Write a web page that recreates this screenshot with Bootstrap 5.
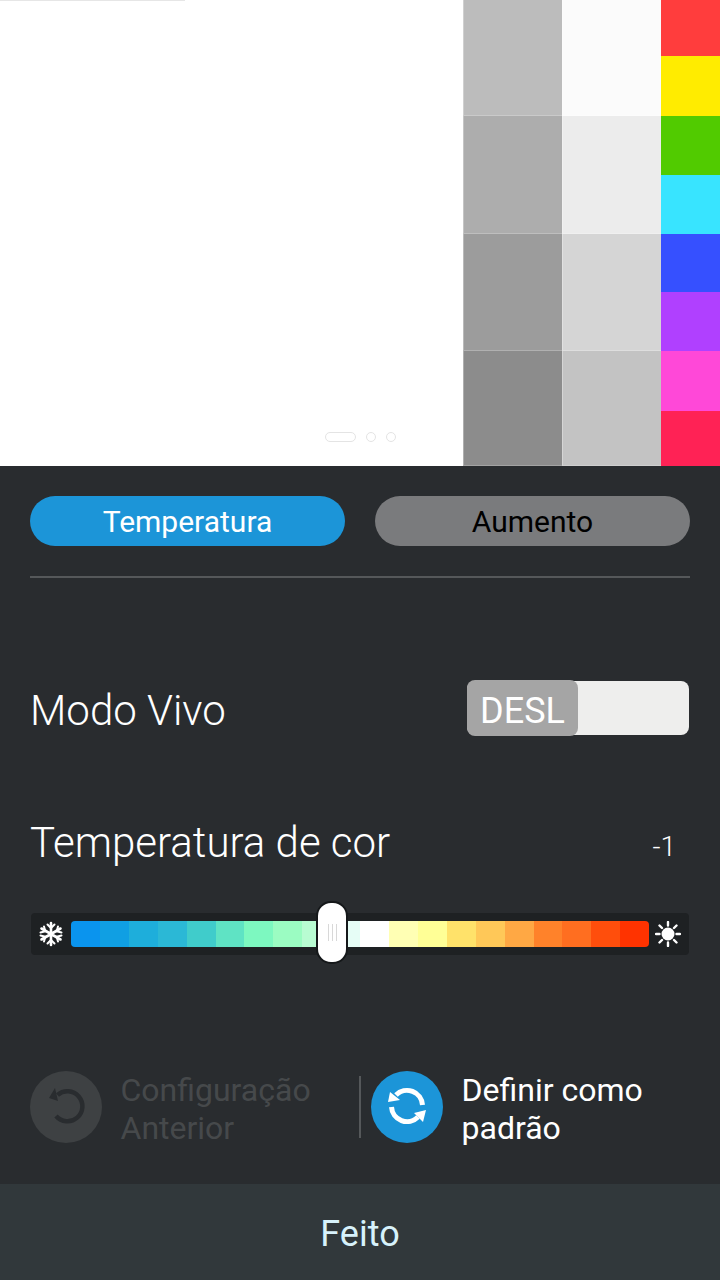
<!DOCTYPE html>
<html lang="pt"><head><meta charset="utf-8">
<link href="https://cdn.jsdelivr.net/npm/bootstrap@5.3.0/dist/css/bootstrap.min.css" rel="stylesheet">
<style>
html,body{margin:0;background:#292c2f}
body{width:720px;height:1280px;overflow:hidden;font-family:Roboto,"Liberation Sans",sans-serif;color:#fff}
.preview{height:466px;background:#fff;position:relative}
.topline{position:absolute;left:0;top:0;width:185px;height:1px;background:#e6e6e6}
.canvas{width:463px;position:relative}
.dots{position:absolute;left:325px;top:432px;gap:10px}
.dot{width:10px;height:10px;border:1px solid #e4e4e4;border-radius:50%}
.dot.wide{width:31px;border-radius:5px}
.grays{width:99px}
.cols{width:59px}
.grays>div{border-bottom:1px solid rgba(255,255,255,.2);border-left:1px solid rgba(255,255,255,.3)}
.r1{height:116px}.r2{height:117.500px}.r3{height:117.500px}.r4{height:115px}
.k1{height:56px}.k2{height:60px}.k3{height:58.500px}.k4{height:59px}.k5{height:58.500px}.k6{height:59px}.k7{height:59.500px}.k8{height:55.500px}
.g1{background:#bcbcbc}.g2{background:#adadad}.g3{background:#9c9c9c}.g4{background:#8c8c8c}
.l1{background:#fbfbfb}.l2{background:#ececec}.l3{background:#d5d5d5}.l4{background:#c3c3c3}
.k1{background:#ff3d3d}.k2{background:#ffec00}.k3{background:#51cb00}.k4{background:#38e4ff}.k5{background:#3650ff}.k6{background:#b040ff}.k7{background:#ff48d8}.k8{background:#ff2255}
.panel{height:718px;padding:30px 30px 0}
.pill{width:315px;height:50px;border-radius:25px;font-size:30px;line-height:52px;text-align:center}
.pill-on{background:#1c95d8;color:#fff}
.pill-off{background:#7a7b7d;color:#000}
.rule{height:2px;background:#55585a;margin-top:30px}
.vivid{margin-top:102px;height:56px}
.lbl{font-size:42px;font-weight:300;line-height:56px;padding-top:6px}
.sw{width:222px;height:54px;background:#eeeeed;border-radius:8px;margin-right:1px}
.sw-thumb{width:111px;height:56px;margin-top:-1px;background:#a5a5a5;border-radius:8px;font-size:36px;font-weight:400;line-height:62px;text-align:center}
.temp-row{margin-top:76px;height:56px}
.num{font-size:28px;font-weight:300;margin-right:14px;margin-top:14px}
.slider{margin-top:45px;height:42px;background:#1e2123;border-radius:4px;position:relative;padding:8px 0 8px 7px;width:658px;margin-left:1px}
.ico{width:26px;height:26px;flex:none}
.bar{width:578px;height:26px;margin:0 6px 0 7px;border-radius:4px;overflow:hidden;flex:none}
.bar>i{flex:1;display:block}
.thumb{position:absolute;left:285px;top:-12px;width:32px;height:63px;background:#fff;border:2px solid #15181a;border-radius:15px;gap:3px}
.thumb>i{width:1px;height:17px;background:#d8d8d8;display:block}
.acts{margin-top:116px;height:72px}
.act{gap:18.500px}
.act-a{width:329px}
.circ{width:72px;height:72px;border-radius:50%;flex:none}
.c-off{background:#3e4143}
.c-on{background:#1c95d8}
.acttxt{font-size:32px;line-height:38px;font-weight:400;padding-top:4px}
.t-off{color:#46494b}
.vsep{width:2px;height:62px;background:#55585a;margin-right:10px;flex:none}
.done{height:96px;background:#31383b;color:#d7f2fb;font-size:36px;font-weight:400;line-height:100px;text-align:center}
</style></head>
<body>
<div class="preview d-flex">
  <div class="canvas"><div class="topline"></div>
    <div class="dots d-flex"><span class="dot wide"></span><span class="dot"></span><span class="dot"></span></div></div>
  <div class="grays d-flex flex-column">
    <div class="g1 r1"></div><div class="g2 r2"></div><div class="g3 r3"></div><div class="g4 r4"></div></div>
  <div class="grays d-flex flex-column">
    <div class="l1 r1"></div><div class="l2 r2"></div><div class="l3 r3"></div><div class="l4 r4"></div></div>
  <div class="cols d-flex flex-column">
    <div class="k1"></div><div class="k2"></div><div class="k3"></div><div class="k4"></div><div class="k5"></div><div class="k6"></div><div class="k7"></div><div class="k8"></div></div>
</div>
<div class="panel">
  <div class="d-flex justify-content-between">
    <div class="pill pill-on">Temperatura</div>
    <div class="pill pill-off">Aumento</div>
  </div>
  <div class="rule"></div>
  <div class="vivid d-flex justify-content-between align-items-center">
    <div class="lbl">Modo Vivo</div>
    <div class="sw"><div class="sw-thumb">DESL</div></div>
  </div>
  <div class="temp-row d-flex justify-content-between align-items-center">
    <div class="lbl">Temperatura de cor</div>
    <div class="num">-1</div>
  </div>
  <div class="slider d-flex align-items-center">
    <svg class="ico" viewBox="0 0 26 26" fill="none" stroke="#fff" stroke-width="2.600" stroke-linecap="round">
      <path d="M13 2v22M3.500 7.500l19 11M22.500 7.500l-19 11"/>
      <path stroke-width="2" d="M9.500 3.500L13 7l3.500-3.500M9.500 22.500L13 19l3.500 3.500M2.500 11.500L7.300 10.300 6 5.500M23.500 11.500L18.700 10.300 20 5.500M2.500 14.500L7.300 15.700 6 20.500M23.500 14.500L18.700 15.700 20 20.500"/>
    </svg>
    <div class="bar d-flex">
      <i style="background:#0a94ee"></i><i style="background:#109fe3"></i><i style="background:#1eaedb"></i><i style="background:#2bb8d6"></i><i style="background:#40cccb"></i><i style="background:#5fe3c4"></i><i style="background:#7df8c0"></i><i style="background:#9bfcc2"></i><i style="background:#b8fcd2"></i><i style="background:#e6fdf6"></i><i style="background:#ffffff"></i><i style="background:#ffffb4"></i><i style="background:#ffff96"></i><i style="background:#ffe26a"></i><i style="background:#ffc858"></i><i style="background:#ffa844"></i><i style="background:#ff822a"></i><i style="background:#ff6e20"></i><i style="background:#ff4e0c"></i><i style="background:#ff3300"></i>
    </div>
    <svg class="ico" viewBox="0 0 26 26" fill="none" stroke="#fff" stroke-width="2.400" stroke-linecap="round">
      <circle cx="13" cy="13" r="6.500" fill="#fff" stroke="none"/>
      <path d="M13 1v3.500M13 21.500V25M1 13h3.500M21.500 13H25M4.500 4.500l2.500 2.500M19 19l2.500 2.500M21.500 4.500L19 7M7 19l-2.500 2.500"/>
    </svg>
    <div class="thumb d-flex align-items-center justify-content-center"><i></i><i></i><i></i></div>
  </div>
  <div class="acts d-flex align-items-center">
    <div class="act act-a d-flex align-items-center">
      <div class="circ c-off d-flex align-items-center justify-content-center">
        <svg width="40" height="40" viewBox="0 0 40 40" fill="none">
          <path d="M11.500 8A15 15 0 1 1 10 29" stroke="#292c2f" stroke-width="4.500"/>
          <path d="M3 11L9 1l3 13z" fill="#292c2f"/>
        </svg>
      </div>
      <div class="acttxt t-off">Configuração<br>Anterior</div>
    </div>
    <div class="vsep"></div>
    <div class="act d-flex align-items-center">
      <div class="circ c-on d-flex align-items-center justify-content-center">
        <svg width="44" height="44" viewBox="0 0 44 44" fill="none">
          <path d="M11 10A15.500 15.500 0 0 1 37.500 20" stroke="#fff" stroke-width="5"/>
          <path d="M6.500 22A15.500 15.500 0 0 0 33 32" stroke="#fff" stroke-width="5"/>
          <path d="M3 17L5 7l10 8z" fill="#fff"/>
          <path d="M41 25L29 28l9 9z" fill="#fff"/>
        </svg>
      </div>
      <div class="acttxt">Definir como<br>padrão</div>
    </div>
  </div>
</div>
<div class="done">Feito</div>
</body></html>
